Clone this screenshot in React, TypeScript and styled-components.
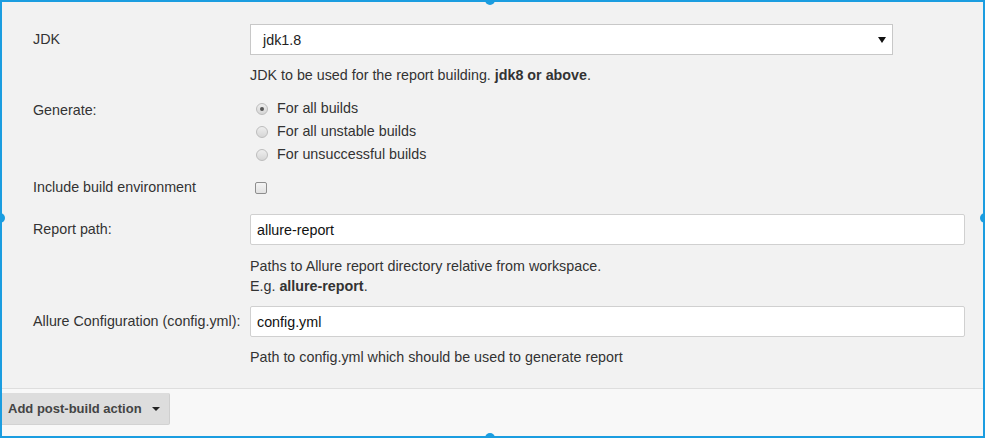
import React from "react";
import styled, { createGlobalStyle } from "styled-components";

const Global = createGlobalStyle`
  html, body { margin: 0; padding: 0; background: #ffffff; }
  body { font-family: "Liberation Sans", Arial, Helvetica, sans-serif; }
  * { box-sizing: border-box; }
`;

const Frame = styled.div`
  position: relative;
  width: 985px;
  height: 438px;
  border: 2px solid #1b9de0;
  background: #f2f2f2;
  display: flex;
  flex-direction: column;
  color: #333;
  font-size: 14.3px;
`;

const Handle = styled.span<{ $top?: string; $left?: string; $right?: string; $bottom?: string }>`
  position: absolute;
  width: 10px;
  height: 10px;
  border-radius: 50%;
  background: #1b9de0;
  ${(p) => (p.$top ? `top: ${p.$top};` : "")}
  ${(p) => (p.$left ? `left: ${p.$left};` : "")}
  ${(p) => (p.$right ? `right: ${p.$right};` : "")}
  ${(p) => (p.$bottom ? `bottom: ${p.$bottom};` : "")}
`;

const Form = styled.div`
  flex: 1;
  padding: 22px 18px 0 31px;
  display: flex;
  flex-direction: column;
`;

const Row = styled.div<{ $gap: number }>`
  display: grid;
  grid-template-columns: 217px 1fr;
  margin-top: ${(p) => p.$gap}px;
`;

const Label = styled.div<{ $pt: number }>`
  padding-top: ${(p) => p.$pt}px;
  line-height: 20px;
  font-size: 14.3px;
  color: #333;
  white-space: nowrap;
`;

const Control = styled.div`
  display: flex;
  flex-direction: column;
`;

const SelectBox = styled.div`
  width: 643px;
  height: 31px;
  background: #fff;
  border: 1px solid #c8c8c8;
  display: flex;
  align-items: center;
  justify-content: space-between;
  padding: 0 6px 0 12px;
  font-size: 14.3px;
  color: #222;
`;

const Caret = styled.span<{ $w: number; $h: number; $color: string }>`
  width: 0;
  height: 0;
  border-left: ${(p) => p.$w / 2}px solid transparent;
  border-right: ${(p) => p.$w / 2}px solid transparent;
  border-top: ${(p) => p.$h}px solid ${(p) => p.$color};
`;

const TextInput = styled.input`
  width: 715px;
  height: 31px;
  background: #fff;
  border: 1px solid #d0d0d0;
  border-radius: 2px;
  padding: 0 6px;
  font-family: "Liberation Sans", Arial, Helvetica, sans-serif;
  font-size: 14.3px;
  color: #111;
  outline: none;
`;

const Help = styled.div<{ $gap: number }>`
  margin-top: ${(p) => p.$gap}px;
  line-height: 20px;
  font-size: 14.3px;
  color: #333;
  b { font-weight: bold; }
`;

const RadioList = styled.div`
  display: flex;
  flex-direction: column;
`;

const RadioItem = styled.label`
  display: flex;
  align-items: center;
  height: 23px;
  font-size: 14.3px;
  color: #333;
`;

const RadioDot = styled.span<{ $checked?: boolean }>`
  width: 12px;
  height: 12px;
  margin: 2px 9px 0 6px;
  border-radius: 50%;
  border: 1px solid #bdbdbd;
  background: linear-gradient(#eeeeee, #d6d6d6);
  display: flex;
  align-items: center;
  justify-content: center;
  &::after {
    content: "";
    width: 4px;
    height: 4px;
    border-radius: 50%;
    background: ${(p) => (p.$checked ? "#555" : "transparent")};
  }
`;

const CheckRow = styled.div`
  display: flex;
  align-items: center;
  height: 20px;
`;

const CheckBox = styled.span`
  width: 12px;
  height: 12px;
  margin: 1px 0 0 5px;
  border: 1px solid #8e8e8e;
  border-radius: 2px;
  background: linear-gradient(#f4f4f4, #e2e2e2);
`;

const Footer = styled.div`
  height: 48px;
  border-top: 1px solid #dedede;
  background: #f8f8f8;
  padding-top: 4px;
`;

const ActionButton = styled.div`
  width: 168px;
  height: 32px;
  background: #dddddd;
  border-right: 1px solid #cfcfcf;
  border-bottom: 1px solid #d2d2d2;
  border-radius: 0 2px 2px 0;
  display: flex;
  align-items: center;
  gap: 10px;
  padding-left: 6px;
  font-size: 13px;
  font-weight: bold;
  color: #444;
`;

export default function App() {
  return (
    <>
      <Global />
      <Frame>
        <Form>
          <Row $gap={0}>
            <Label $pt={5}>JDK</Label>
            <Control>
              <SelectBox>
                <span>jdk1.8</span>
                <Caret $w={8} $h={6} $color="#111" />
              </SelectBox>
              <Help $gap={10}>
                JDK to be used for the report building. <b>jdk8 or above</b>.
              </Help>
            </Control>
          </Row>
          <Row $gap={11}>
            <Label $pt={4}>Generate:</Label>
            <RadioList>
              <RadioItem>
                <RadioDot $checked />
                For all builds
              </RadioItem>
              <RadioItem>
                <RadioDot />
                For all unstable builds
              </RadioItem>
              <RadioItem>
                <RadioDot />
                For unsuccessful builds
              </RadioItem>
            </RadioList>
          </Row>
          <Row $gap={12}>
            <Label $pt={0}>Include build environment</Label>
            <CheckRow>
              <CheckBox />
            </CheckRow>
          </Row>
          <Row $gap={17}>
            <Label $pt={5}>Report path:</Label>
            <Control>
              <TextInput readOnly value="allure-report" />
              <Help $gap={11}>
                Paths to Allure report directory relative from workspace.
                <br />
                E.g. <b>allure-report</b>.
              </Help>
            </Control>
          </Row>
          <Row $gap={10}>
            <Label $pt={5}>Allure Configuration (config.yml):</Label>
            <Control>
              <TextInput readOnly value="config.yml" />
              <Help $gap={10}>Path to config.yml which should be used to generate report</Help>
            </Control>
          </Row>
        </Form>
        <Footer>
          <ActionButton>
            Add post-build action
            <Caret $w={8} $h={4} $color="#222" />
          </ActionButton>
        </Footer>
        <Handle $top="-7px" $left="483px" />
        <Handle $bottom="-7px" $left="483px" />
        <Handle $top="211px" $left="-7px" />
        <Handle $top="211px" $right="-7px" />
      </Frame>
    </>
  );
}
